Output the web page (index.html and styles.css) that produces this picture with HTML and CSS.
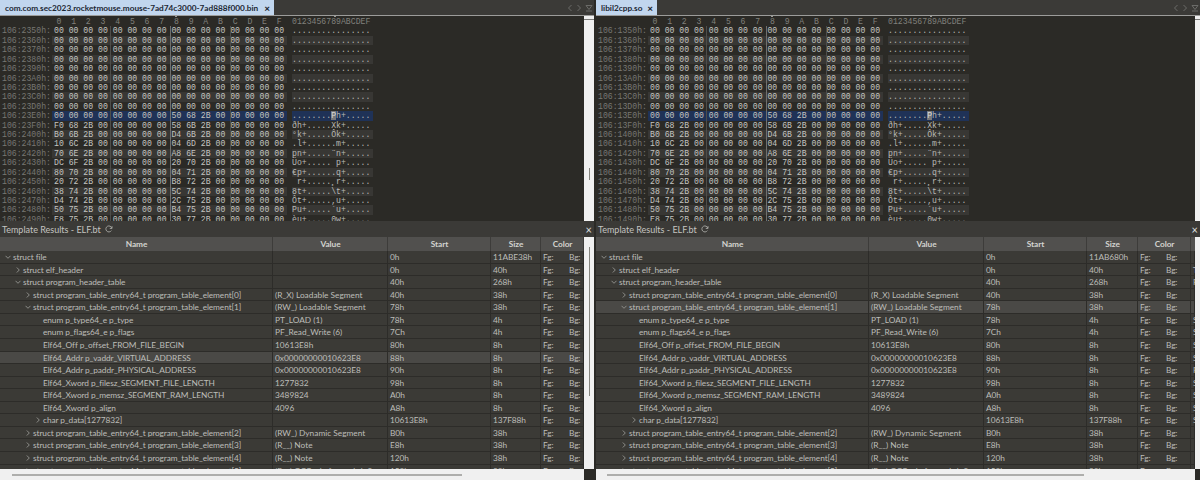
FILE: index.html
```html
<!DOCTYPE html>
<html>
  <head>
    <title>Template Results - ELF.bt</title>
    <meta charset="utf-8">
    <link rel="stylesheet" href="styles.css">
  </head>
  <body>
    <svg class="defs" width="0" height="0">
      <symbol id="open" viewBox="0 0 6 6"><path d="M.5 1.8 3 4.3 5.5 1.8" fill="none" stroke="currentColor"/></symbol>
      <symbol id="shut" viewBox="0 0 6 6"><path d="M1.8.5 4.3 3 1.8 5.5" fill="none" stroke="currentColor"/></symbol>
      <symbol id="redo" viewBox="0 0 8 8"><path d="M6.8 3.2A3 3 0 1 0 6.4 5.6M7 1.2V3.4H4.8" fill="none" stroke="currentColor"/></symbol>
    </svg>

    <!-- left file -->
    <div class="pane pane-left">
      <div class="tabbar">
        <div class="tab"><span>com.com.sec2023.rocketmouse.mouse-7ad74c3000-7ad888f000.bin</span><b>&times;</b></div>
        <div class="navs">
          <svg width="6" height="8" viewBox="0 0 6 8"><path d="M4.5 1 1.5 4 4.5 7" fill="none" stroke="currentColor"/></svg>
          <svg width="6" height="8" viewBox="0 0 6 8"><path d="M1.5 1 4.5 4 1.5 7" fill="none" stroke="currentColor"/></svg>
          <svg width="8" height="8" viewBox="0 0 8 8"><path d="M1 1.5H7L4 5.5Z M1 7H7" fill="none" stroke="currentColor"/></svg>
        </div>
      </div>
      <div class="hexbox">
        <div class="hexview">
          <div class="guides"><i></i><i></i></div>
          <div class="hhead"><span class="addr"></span><span class="bytes"><u>0</u><u>1</u><u>2</u><u>3</u><u>4</u><u>5</u><u>6</u><u>7</u><u>8</u><u>9</u><u>A</u><u>B</u><u>C</u><u>D</u><u>E</u><u>F</u></span><span class="chars">0123456789ABCDEF</span></div>
          <div class="hrow"><span class="addr">106:2350h:</span><span class="bytes">00 00 00 00 00 00 00 00 00 00 00 00 00 00 00 00</span><span class="chars">................</span></div>
          <div class="hrow alt"><span class="addr">106:2360h:</span><span class="bytes">00 00 00 00 00 00 00 00 00 00 00 00 00 00 00 00</span><span class="chars">................</span></div>
          <div class="hrow"><span class="addr">106:2370h:</span><span class="bytes">00 00 00 00 00 00 00 00 00 00 00 00 00 00 00 00</span><span class="chars">................</span></div>
          <div class="hrow alt"><span class="addr">106:2380h:</span><span class="bytes">00 00 00 00 00 00 00 00 00 00 00 00 00 00 00 00</span><span class="chars">................</span></div>
          <div class="hrow"><span class="addr">106:2390h:</span><span class="bytes">00 00 00 00 00 00 00 00 00 00 00 00 00 00 00 00</span><span class="chars">................</span></div>
          <div class="hrow alt"><span class="addr">106:23A0h:</span><span class="bytes">00 00 00 00 00 00 00 00 00 00 00 00 00 00 00 00</span><span class="chars">................</span></div>
          <div class="hrow"><span class="addr">106:23B0h:</span><span class="bytes">00 00 00 00 00 00 00 00 00 00 00 00 00 00 00 00</span><span class="chars">................</span></div>
          <div class="hrow alt"><span class="addr">106:23C0h:</span><span class="bytes">00 00 00 00 00 00 00 00 00 00 00 00 00 00 00 00</span><span class="chars">................</span></div>
          <div class="hrow"><span class="addr">106:23D0h:</span><span class="bytes">00 00 00 00 00 00 00 00 00 00 00 00 00 00 00 00</span><span class="chars">................</span></div>
          <div class="hrow sel"><span class="addr">106:23E0h:</span><span class="bytes">00 00 00 00 00 00 00 00 <em>5</em>0 68 2B 00 00 00 00 00</span><span class="chars">........<mark>P</mark>h+.....</span></div>
          <div class="hrow"><span class="addr">106:23F0h:</span><span class="bytes">F0 68 2B 00 00 00 00 00 58 6B 2B 00 00 00 00 00</span><span class="chars">ðh+.....Xk+.....</span></div>
          <div class="hrow alt"><span class="addr">106:2400h:</span><span class="bytes">B0 6B 2B 00 00 00 00 00 D4 6B 2B 00 00 00 00 00</span><span class="chars">°k+.....Ôk+.....</span></div>
          <div class="hrow"><span class="addr">106:2410h:</span><span class="bytes">10 6C 2B 00 00 00 00 00 04 6D 2B 00 00 00 00 00</span><span class="chars">.l+......m+.....</span></div>
          <div class="hrow alt"><span class="addr">106:2420h:</span><span class="bytes">70 6E 2B 00 00 00 00 00 A8 6E 2B 00 00 00 00 00</span><span class="chars">pn+.....¨n+.....</span></div>
          <div class="hrow"><span class="addr">106:2430h:</span><span class="bytes">DC 6F 2B 00 00 00 00 00 20 70 2B 00 00 00 00 00</span><span class="chars">Üo+..... p+.....</span></div>
          <div class="hrow alt"><span class="addr">106:2440h:</span><span class="bytes">80 70 2B 00 00 00 00 00 04 71 2B 00 00 00 00 00</span><span class="chars">€p+......q+.....</span></div>
          <div class="hrow"><span class="addr">106:2450h:</span><span class="bytes">20 72 2B 00 00 00 00 00 B8 72 2B 00 00 00 00 00</span><span class="chars"> r+.....¸r+.....</span></div>
          <div class="hrow alt"><span class="addr">106:2460h:</span><span class="bytes">38 74 2B 00 00 00 00 00 5C 74 2B 00 00 00 00 00</span><span class="chars">8t+.....\t+.....</span></div>
          <div class="hrow"><span class="addr">106:2470h:</span><span class="bytes">D4 74 2B 00 00 00 00 00 2C 75 2B 00 00 00 00 00</span><span class="chars">Ôt+.....,u+.....</span></div>
          <div class="hrow alt"><span class="addr">106:2480h:</span><span class="bytes">50 75 2B 00 00 00 00 00 B4 75 2B 00 00 00 00 00</span><span class="chars">Pu+.....´u+.....</span></div>
          <div class="hrow"><span class="addr">106:2490h:</span><span class="bytes">E8 75 2B 00 00 00 00 00 30 77 2B 00 00 00 00 00</span><span class="chars">èu+.....0w+.....</span></div>
        </div>
        <div class="vbar"><div class="thumb hex-thumb"></div></div>
      </div>
      <div class="title"><span>Template Results - ELF.bt</span><svg class="redo" width="8" height="8"><use href="#redo"/></svg><b>&times;</b></div>
      <div class="tablebox">
        <div class="ttable">
          <div class="thead"><div>Name</div><div>Value</div><div>Start</div><div>Size</div><div>Color</div></div>
          <div class="trow"><div class="lv0"><svg><use href="#open"/></svg>struct file</div><div></div><div>0h</div><div>11ABE38h</div><div class="fgbg"><span>Fg:</span><span>Bg:</span></div></div>
          <div class="trow"><div class="lv1"><svg><use href="#shut"/></svg>struct elf_header</div><div></div><div>0h</div><div>40h</div><div class="fgbg"><span>Fg:</span><span>Bg:</span></div></div>
          <div class="trow"><div class="lv1"><svg><use href="#open"/></svg>struct program_header_table</div><div></div><div>40h</div><div>268h</div><div class="fgbg"><span>Fg:</span><span>Bg:</span></div></div>
          <div class="trow"><div class="lv2"><svg><use href="#shut"/></svg>struct program_table_entry64_t program_table_element[0]</div><div>(R_X) Loadable Segment</div><div>40h</div><div>38h</div><div class="fgbg"><span>Fg:</span><span>Bg:</span></div></div>
          <div class="trow"><div class="lv2"><svg><use href="#open"/></svg>struct program_table_entry64_t program_table_element[1]</div><div>(RW_) Loadable Segment</div><div>78h</div><div>38h</div><div class="fgbg"><span>Fg:</span><span>Bg:</span></div></div>
          <div class="trow"><div class="lv3"><svg></svg>enum p_type64_e p_type</div><div>PT_LOAD (1)</div><div>78h</div><div>4h</div><div class="fgbg"><span>Fg:</span><span>Bg:</span></div></div>
          <div class="trow"><div class="lv3"><svg></svg>enum p_flags64_e p_flags</div><div>PF_Read_Write (6)</div><div>7Ch</div><div>4h</div><div class="fgbg"><span>Fg:</span><span>Bg:</span></div></div>
          <div class="trow"><div class="lv3"><svg></svg>Elf64_Off p_offset_FROM_FILE_BEGIN</div><div>10613E8h</div><div>80h</div><div>8h</div><div class="fgbg"><span>Fg:</span><span>Bg:</span></div></div>
          <div class="trow cur"><div class="lv3"><svg></svg>Elf64_Addr p_vaddr_VIRTUAL_ADDRESS</div><div>0x00000000010623E8</div><div>88h</div><div>8h</div><div class="fgbg"><span>Fg:</span><span>Bg:</span></div></div>
          <div class="trow"><div class="lv3"><svg></svg>Elf64_Addr p_paddr_PHYSICAL_ADDRESS</div><div>0x00000000010623E8</div><div>90h</div><div>8h</div><div class="fgbg"><span>Fg:</span><span>Bg:</span></div></div>
          <div class="trow"><div class="lv3"><svg></svg>Elf64_Xword p_filesz_SEGMENT_FILE_LENGTH</div><div>1277832</div><div>98h</div><div>8h</div><div class="fgbg"><span>Fg:</span><span>Bg:</span></div></div>
          <div class="trow"><div class="lv3"><svg></svg>Elf64_Xword p_memsz_SEGMENT_RAM_LENGTH</div><div>3489824</div><div>A0h</div><div>8h</div><div class="fgbg"><span>Fg:</span><span>Bg:</span></div></div>
          <div class="trow"><div class="lv3"><svg></svg>Elf64_Xword p_align</div><div>4096</div><div>A8h</div><div>8h</div><div class="fgbg"><span>Fg:</span><span>Bg:</span></div></div>
          <div class="trow"><div class="lv2b"><svg><use href="#shut"/></svg>char p_data[1277832]</div><div></div><div>10613E8h</div><div>137F88h</div><div class="fgbg"><span>Fg:</span><span>Bg:</span></div></div>
          <div class="trow"><div class="lv2"><svg><use href="#shut"/></svg>struct program_table_entry64_t program_table_element[2]</div><div>(RW_) Dynamic Segment</div><div>B0h</div><div>38h</div><div class="fgbg"><span>Fg:</span><span>Bg:</span></div></div>
          <div class="trow"><div class="lv2"><svg><use href="#shut"/></svg>struct program_table_entry64_t program_table_element[3]</div><div>(R__) Note</div><div>E8h</div><div>38h</div><div class="fgbg"><span>Fg:</span><span>Bg:</span></div></div>
          <div class="trow"><div class="lv2"><svg><use href="#shut"/></svg>struct program_table_entry64_t program_table_element[4]</div><div>(R__) Note</div><div>120h</div><div>38h</div><div class="fgbg"><span>Fg:</span><span>Bg:</span></div></div>
          <div class="trow"><div class="lv2"><svg><use href="#shut"/></svg>struct program_table_entry64_t program_table_element[5]</div><div>(R__) GCC .eh_frame_hdr Segment</div><div>158h</div><div>38h</div><div class="fgbg"><span>Fg:</span><span>Bg:</span></div></div>
        </div>
        <div class="vbar"><div class="thumb table-thumb"></div></div>
      </div>
      <div class="hbarbox"><div class="hbar"><div class="hthumb"></div></div></div>
    </div>

    <!-- right file -->
    <div class="pane pane-right">
      <div class="tabbar">
        <div class="tab"><span>libil2cpp.so</span><b>&times;</b></div>
        <div class="navs">
          <svg width="6" height="8" viewBox="0 0 6 8"><path d="M4.5 1 1.5 4 4.5 7" fill="none" stroke="currentColor"/></svg>
          <svg width="6" height="8" viewBox="0 0 6 8"><path d="M1.5 1 4.5 4 1.5 7" fill="none" stroke="currentColor"/></svg>
          <svg width="8" height="8" viewBox="0 0 8 8"><path d="M1 1.5H7L4 5.5Z M1 7H7" fill="none" stroke="currentColor"/></svg>
        </div>
      </div>
      <div class="hexbox">
        <div class="hexview">
          <div class="guides"><i></i><i></i></div>
          <div class="hhead"><span class="addr"></span><span class="bytes"><u>0</u><u>1</u><u>2</u><u>3</u><u>4</u><u>5</u><u>6</u><u>7</u><u>8</u><u>9</u><u>A</u><u>B</u><u>C</u><u>D</u><u>E</u><u>F</u></span><span class="chars">0123456789ABCDEF</span></div>
          <div class="hrow"><span class="addr">106:1350h:</span><span class="bytes">00 00 00 00 00 00 00 00 00 00 00 00 00 00 00 00</span><span class="chars">................</span></div>
          <div class="hrow alt"><span class="addr">106:1360h:</span><span class="bytes">00 00 00 00 00 00 00 00 00 00 00 00 00 00 00 00</span><span class="chars">................</span></div>
          <div class="hrow"><span class="addr">106:1370h:</span><span class="bytes">00 00 00 00 00 00 00 00 00 00 00 00 00 00 00 00</span><span class="chars">................</span></div>
          <div class="hrow alt"><span class="addr">106:1380h:</span><span class="bytes">00 00 00 00 00 00 00 00 00 00 00 00 00 00 00 00</span><span class="chars">................</span></div>
          <div class="hrow"><span class="addr">106:1390h:</span><span class="bytes">00 00 00 00 00 00 00 00 00 00 00 00 00 00 00 00</span><span class="chars">................</span></div>
          <div class="hrow alt"><span class="addr">106:13A0h:</span><span class="bytes">00 00 00 00 00 00 00 00 00 00 00 00 00 00 00 00</span><span class="chars">................</span></div>
          <div class="hrow"><span class="addr">106:13B0h:</span><span class="bytes">00 00 00 00 00 00 00 00 00 00 00 00 00 00 00 00</span><span class="chars">................</span></div>
          <div class="hrow alt"><span class="addr">106:13C0h:</span><span class="bytes">00 00 00 00 00 00 00 00 00 00 00 00 00 00 00 00</span><span class="chars">................</span></div>
          <div class="hrow"><span class="addr">106:13D0h:</span><span class="bytes">00 00 00 00 00 00 00 00 00 00 00 00 00 00 00 00</span><span class="chars">................</span></div>
          <div class="hrow sel"><span class="addr">106:13E0h:</span><span class="bytes">00 00 00 00 00 00 00 00 <em>5</em>0 68 2B 00 00 00 00 00</span><span class="chars">........<mark>P</mark>h+.....</span></div>
          <div class="hrow"><span class="addr">106:13F0h:</span><span class="bytes">F0 68 2B 00 00 00 00 00 58 6B 2B 00 00 00 00 00</span><span class="chars">ðh+.....Xk+.....</span></div>
          <div class="hrow alt"><span class="addr">106:1400h:</span><span class="bytes">B0 6B 2B 00 00 00 00 00 D4 6B 2B 00 00 00 00 00</span><span class="chars">°k+.....Ôk+.....</span></div>
          <div class="hrow"><span class="addr">106:1410h:</span><span class="bytes">10 6C 2B 00 00 00 00 00 04 6D 2B 00 00 00 00 00</span><span class="chars">.l+......m+.....</span></div>
          <div class="hrow alt"><span class="addr">106:1420h:</span><span class="bytes">70 6E 2B 00 00 00 00 00 A8 6E 2B 00 00 00 00 00</span><span class="chars">pn+.....¨n+.....</span></div>
          <div class="hrow"><span class="addr">106:1430h:</span><span class="bytes">DC 6F 2B 00 00 00 00 00 20 70 2B 00 00 00 00 00</span><span class="chars">Üo+..... p+.....</span></div>
          <div class="hrow alt"><span class="addr">106:1440h:</span><span class="bytes">80 70 2B 00 00 00 00 00 04 71 2B 00 00 00 00 00</span><span class="chars">€p+......q+.....</span></div>
          <div class="hrow"><span class="addr">106:1450h:</span><span class="bytes">20 72 2B 00 00 00 00 00 B8 72 2B 00 00 00 00 00</span><span class="chars"> r+.....¸r+.....</span></div>
          <div class="hrow alt"><span class="addr">106:1460h:</span><span class="bytes">38 74 2B 00 00 00 00 00 5C 74 2B 00 00 00 00 00</span><span class="chars">8t+.....\t+.....</span></div>
          <div class="hrow"><span class="addr">106:1470h:</span><span class="bytes">D4 74 2B 00 00 00 00 00 2C 75 2B 00 00 00 00 00</span><span class="chars">Ôt+.....,u+.....</span></div>
          <div class="hrow alt"><span class="addr">106:1480h:</span><span class="bytes">50 75 2B 00 00 00 00 00 B4 75 2B 00 00 00 00 00</span><span class="chars">Pu+.....´u+.....</span></div>
          <div class="hrow"><span class="addr">106:1490h:</span><span class="bytes">E8 75 2B 00 00 00 00 00 30 77 2B 00 00 00 00 00</span><span class="chars">èu+.....0w+.....</span></div>
        </div>
        <div class="vbar"><div class="thumb hex-thumb"></div></div>
      </div>
      <div class="title"><span>Template Results - ELF.bt</span><svg class="redo" width="8" height="8"><use href="#redo"/></svg><b>&times;</b></div>
      <div class="tablebox">
        <div class="ttable">
          <div class="thead"><div>Name</div><div>Value</div><div>Start</div><div>Size</div><div>Color</div></div>
          <div class="trow"><div class="lv0"><svg><use href="#open"/></svg>struct file</div><div></div><div>0h</div><div>11AB680h</div><div class="fgbg"><span>Fg:</span><span>Bg:</span></div><div></div></div>
          <div class="trow"><div class="lv1"><svg><use href="#shut"/></svg>struct elf_header</div><div></div><div>0h</div><div>40h</div><div class="fgbg"><span>Fg:</span><span>Bg:</span></div><div>T</div></div>
          <div class="trow"><div class="lv1"><svg><use href="#open"/></svg>struct program_header_table</div><div></div><div>40h</div><div>268h</div><div class="fgbg"><span>Fg:</span><span>Bg:</span></div><div>P</div></div>
          <div class="trow"><div class="lv2"><svg><use href="#shut"/></svg>struct program_table_entry64_t program_table_element[0]</div><div>(R_X) Loadable Segment</div><div>40h</div><div>38h</div><div class="fgbg"><span>Fg:</span><span>Bg:</span></div><div></div></div>
          <div class="trow cur"><div class="lv2"><svg><use href="#open"/></svg>struct program_table_entry64_t program_table_element[1]</div><div>(RW_) Loadable Segment</div><div>78h</div><div>38h</div><div class="fgbg"><span>Fg:</span><span>Bg:</span></div><div></div></div>
          <div class="trow"><div class="lv3"><svg></svg>enum p_type64_e p_type</div><div>PT_LOAD (1)</div><div>78h</div><div>4h</div><div class="fgbg"><span>Fg:</span><span>Bg:</span></div><div>S</div></div>
          <div class="trow"><div class="lv3"><svg></svg>enum p_flags64_e p_flags</div><div>PF_Read_Write (6)</div><div>7Ch</div><div>4h</div><div class="fgbg"><span>Fg:</span><span>Bg:</span></div><div>S</div></div>
          <div class="trow"><div class="lv3"><svg></svg>Elf64_Off p_offset_FROM_FILE_BEGIN</div><div>10613E8h</div><div>80h</div><div>8h</div><div class="fgbg"><span>Fg:</span><span>Bg:</span></div><div>S</div></div>
          <div class="trow"><div class="lv3"><svg></svg>Elf64_Addr p_vaddr_VIRTUAL_ADDRESS</div><div>0x00000000010623E8</div><div>88h</div><div>8h</div><div class="fgbg"><span>Fg:</span><span>Bg:</span></div><div>S</div></div>
          <div class="trow"><div class="lv3"><svg></svg>Elf64_Addr p_paddr_PHYSICAL_ADDRESS</div><div>0x00000000010623E8</div><div>90h</div><div>8h</div><div class="fgbg"><span>Fg:</span><span>Bg:</span></div><div>R</div></div>
          <div class="trow"><div class="lv3"><svg></svg>Elf64_Xword p_filesz_SEGMENT_FILE_LENGTH</div><div>1277832</div><div>98h</div><div>8h</div><div class="fgbg"><span>Fg:</span><span>Bg:</span></div><div>S</div></div>
          <div class="trow"><div class="lv3"><svg></svg>Elf64_Xword p_memsz_SEGMENT_RAM_LENGTH</div><div>3489824</div><div>A0h</div><div>8h</div><div class="fgbg"><span>Fg:</span><span>Bg:</span></div><div>S</div></div>
          <div class="trow"><div class="lv3"><svg></svg>Elf64_Xword p_align</div><div>4096</div><div>A8h</div><div>8h</div><div class="fgbg"><span>Fg:</span><span>Bg:</span></div><div>S</div></div>
          <div class="trow"><div class="lv2b"><svg><use href="#shut"/></svg>char p_data[1277832]</div><div></div><div>10613E8h</div><div>137F88h</div><div class="fgbg"><span>Fg:</span><span>Bg:</span></div><div>S</div></div>
          <div class="trow"><div class="lv2"><svg><use href="#shut"/></svg>struct program_table_entry64_t program_table_element[2]</div><div>(RW_) Dynamic Segment</div><div>B0h</div><div>38h</div><div class="fgbg"><span>Fg:</span><span>Bg:</span></div><div></div></div>
          <div class="trow"><div class="lv2"><svg><use href="#shut"/></svg>struct program_table_entry64_t program_table_element[3]</div><div>(R__) Note</div><div>E8h</div><div>38h</div><div class="fgbg"><span>Fg:</span><span>Bg:</span></div><div></div></div>
          <div class="trow"><div class="lv2"><svg><use href="#shut"/></svg>struct program_table_entry64_t program_table_element[4]</div><div>(R__) Note</div><div>120h</div><div>38h</div><div class="fgbg"><span>Fg:</span><span>Bg:</span></div><div></div></div>
          <div class="trow"><div class="lv2"><svg><use href="#shut"/></svg>struct program_table_entry64_t program_table_element[5]</div><div>(R__) GCC .eh_frame_hdr Segment</div><div>158h</div><div>38h</div><div class="fgbg"><span>Fg:</span><span>Bg:</span></div><div></div></div>
        </div>
        <div class="vbar"><div class="thumb table-thumb"></div></div>
      </div>
      <div class="hbarbox"><div class="hbar"><div class="hthumb"></div></div></div>
    </div>
  </body>
</html>
```

FILE: styles.css
```css
html, body{
  margin:0;
  height:480px;
  overflow:hidden;
}
body{
  display:flex;
  gap:2px;
  background:#2b2a26;
  font-family:Lato, sans-serif;
  font-size:8.3px;
  letter-spacing:-0.08px;
  color:#bdbdb9;
}
.defs{
  position:absolute;
}
.pane{
  display:flex;
  flex-direction:column;
  flex:none;
  height:480px;
  overflow:hidden;
}
.pane-left{
  width:594px;
  --content:584px;
  --tabw:274px;
  --cols:273px 115px 103px 50px 43px;
}
.pane-right{
  width:604px;
  --content:599px;
  --tabw:61px;
  --cols:273px 115px 103px 51px 53px 4px;
}

/* tabs */
.tabbar{
  display:flex;
  justify-content:space-between;
  flex:none;
  height:15px;
  background:#3b3a37;
  border-bottom:1px solid #9c9c9a;
}
.tab{
  display:flex;
  align-items:center;
  justify-content:space-between;
  box-sizing:border-box;
  width:var(--tabw);
  padding:0 4px 0 5px;
  background:#c1d6ee;
  color:#1c2733;
  font-size:8.25px;
  font-weight:700;
  letter-spacing:0;
  white-space:nowrap;
}
.tab b{
  font-size:10px;
}
.navs{
  display:flex;
  align-items:center;
  gap:3px;
  color:#6b6b68;
  margin-right:1px;
}

/* hex view */
.hexbox{
  display:flex;
  flex:none;
  height:205px;
}
.hexview{
  position:relative;
  flex:none;
  box-sizing:border-box;
  width:var(--content);
  padding-top:1px;
  overflow:hidden;
  font-family:"Liberation Mono", monospace;
  font-size:8.17px;
  letter-spacing:0;
  line-height:9.43px;
}
.hexview::before, .hexview::after{
  content:"";
  position:absolute;
  top:0;
  left:175px;
  width:2px;
  height:1px;
  background:#9a9a96;
}
.hexview::after{
  left:334px;
}
.hhead span, .hrow span{
  white-space:pre;
}
.guides{
  position:absolute;
  left:110px;
  top:10px;
  bottom:0;
  display:flex;
  border-right:1px solid #4d4d4a;
}
.guides i{
  width:58.8px;
  border-left:1px solid #4d4d4a;
}
.guides i + i{
  border-left-color:#70706d;
}
.hhead, .hrow{
  display:flex;
  height:9.43px;
}
.hhead .bytes{
  display:flex;
}
.hhead u{
  flex:none;
  width:14.7px;
  text-decoration:none;
  text-align:center;
  margin-left:-2.45px;
  margin-right:2.45px;
}
.addr{
  flex:none;
  width:50px;
  padding-left:2px;
  color:#777773;
}
.bytes{
  flex:none;
  width:233px;
  padding-left:2px;
  color:#c4c4c0;
}
.chars{
  flex:none;
  width:81px;
  margin-left:5px;
  color:#b9b9b5;
}
.hhead .bytes, .hhead .chars{
  color:#80807c;
}
.alt .bytes, .alt .chars{
  background:#383734;
}
.sel .bytes, .sel .chars{
  background:#1f3257;
}
.hrow em{
  font-style:normal;
  box-shadow:-1px 0 0 #e6e6e6;
}
.hrow mark{
  background:#77777a;
  color:#d8d8d8;
}

/* scrollbars */
.vbar{
  display:flex;
  flex-direction:column;
  align-items:center;
  flex:none;
  width:10px;
  background:#f0f0f0;
}
.hexbox .vbar::before{
  content:"";
  width:100%;
  height:1px;
  margin-top:3px;
  background:#7d7d7a;
}
.thumb{
  width:1px;
  background:#85857f;
}
.hex-thumb{
  margin-top:148px;
  height:12px;
}
.table-thumb{
  margin-top:10px;
  height:149px;
}
.hbarbox{
  display:flex;
  flex:none;
  height:11px;
}
.hbar{
  flex:none;
  width:var(--content);
  background:#f0f0f0;
}
.hthumb{
  height:2px;
  width:450px;
  margin:5px 0 0 12px;
  background:#aeaeac;
}
.pane-right .hthumb{
  width:477px;
  margin-left:11px;
}

/* template results */
.title{
  display:flex;
  align-items:center;
  flex:none;
  height:16px;
  padding-left:2px;
  background:#3b3a37;
  font-size:9px;
  letter-spacing:0;
  color:#c4c4c0;
}
.redo{
  margin-left:4px;
  color:#a0a09c;
}
.title b{
  margin-left:auto;
  margin-right:2px;
  font-size:11px;
  font-weight:400;
  color:#e0e0e0;
}
.tablebox{
  display:flex;
  flex:1;
  min-height:0;
}
.ttable{
  flex:none;
  width:var(--content);
  overflow:hidden;
}
.thead, .trow{
  display:grid;
  grid-template-columns:var(--cols);
  white-space:nowrap;
}
.thead{
  height:14px;
  line-height:14px;
  background:#51504e;
  font-weight:700;
  color:#d4d4d0;
  text-align:center;
}
.thead div{
  box-shadow:inset -1px 0 0 #3d3c3a;
}
.trow{
  box-sizing:border-box;
  height:12.57px;
  line-height:12px;
  background:#3b3a36;
  border-bottom:1px solid #2d2c29;
}
.trow > div{
  padding-left:2px;
  overflow:hidden;
  box-shadow:inset -1px 0 0 #2d2c29;
}
.trow > div:nth-child(2){
  letter-spacing:0;
}
.trow.cur{
  background:#4a4946;
}
.trow svg{
  display:inline-block;
  width:6px;
  height:6px;
  margin-right:2px;
  color:#8d8d89;
}
.trow .lv0{
  padding-left:5px;
}
.trow .lv1{
  padding-left:15px;
}
.trow .lv2{
  padding-left:25px;
}
.trow .lv2b, .trow .lv3{
  padding-left:35px;
}
.fgbg{
  display:flex;
}
.fgbg span{
  flex:none;
  width:26px;
}
```
